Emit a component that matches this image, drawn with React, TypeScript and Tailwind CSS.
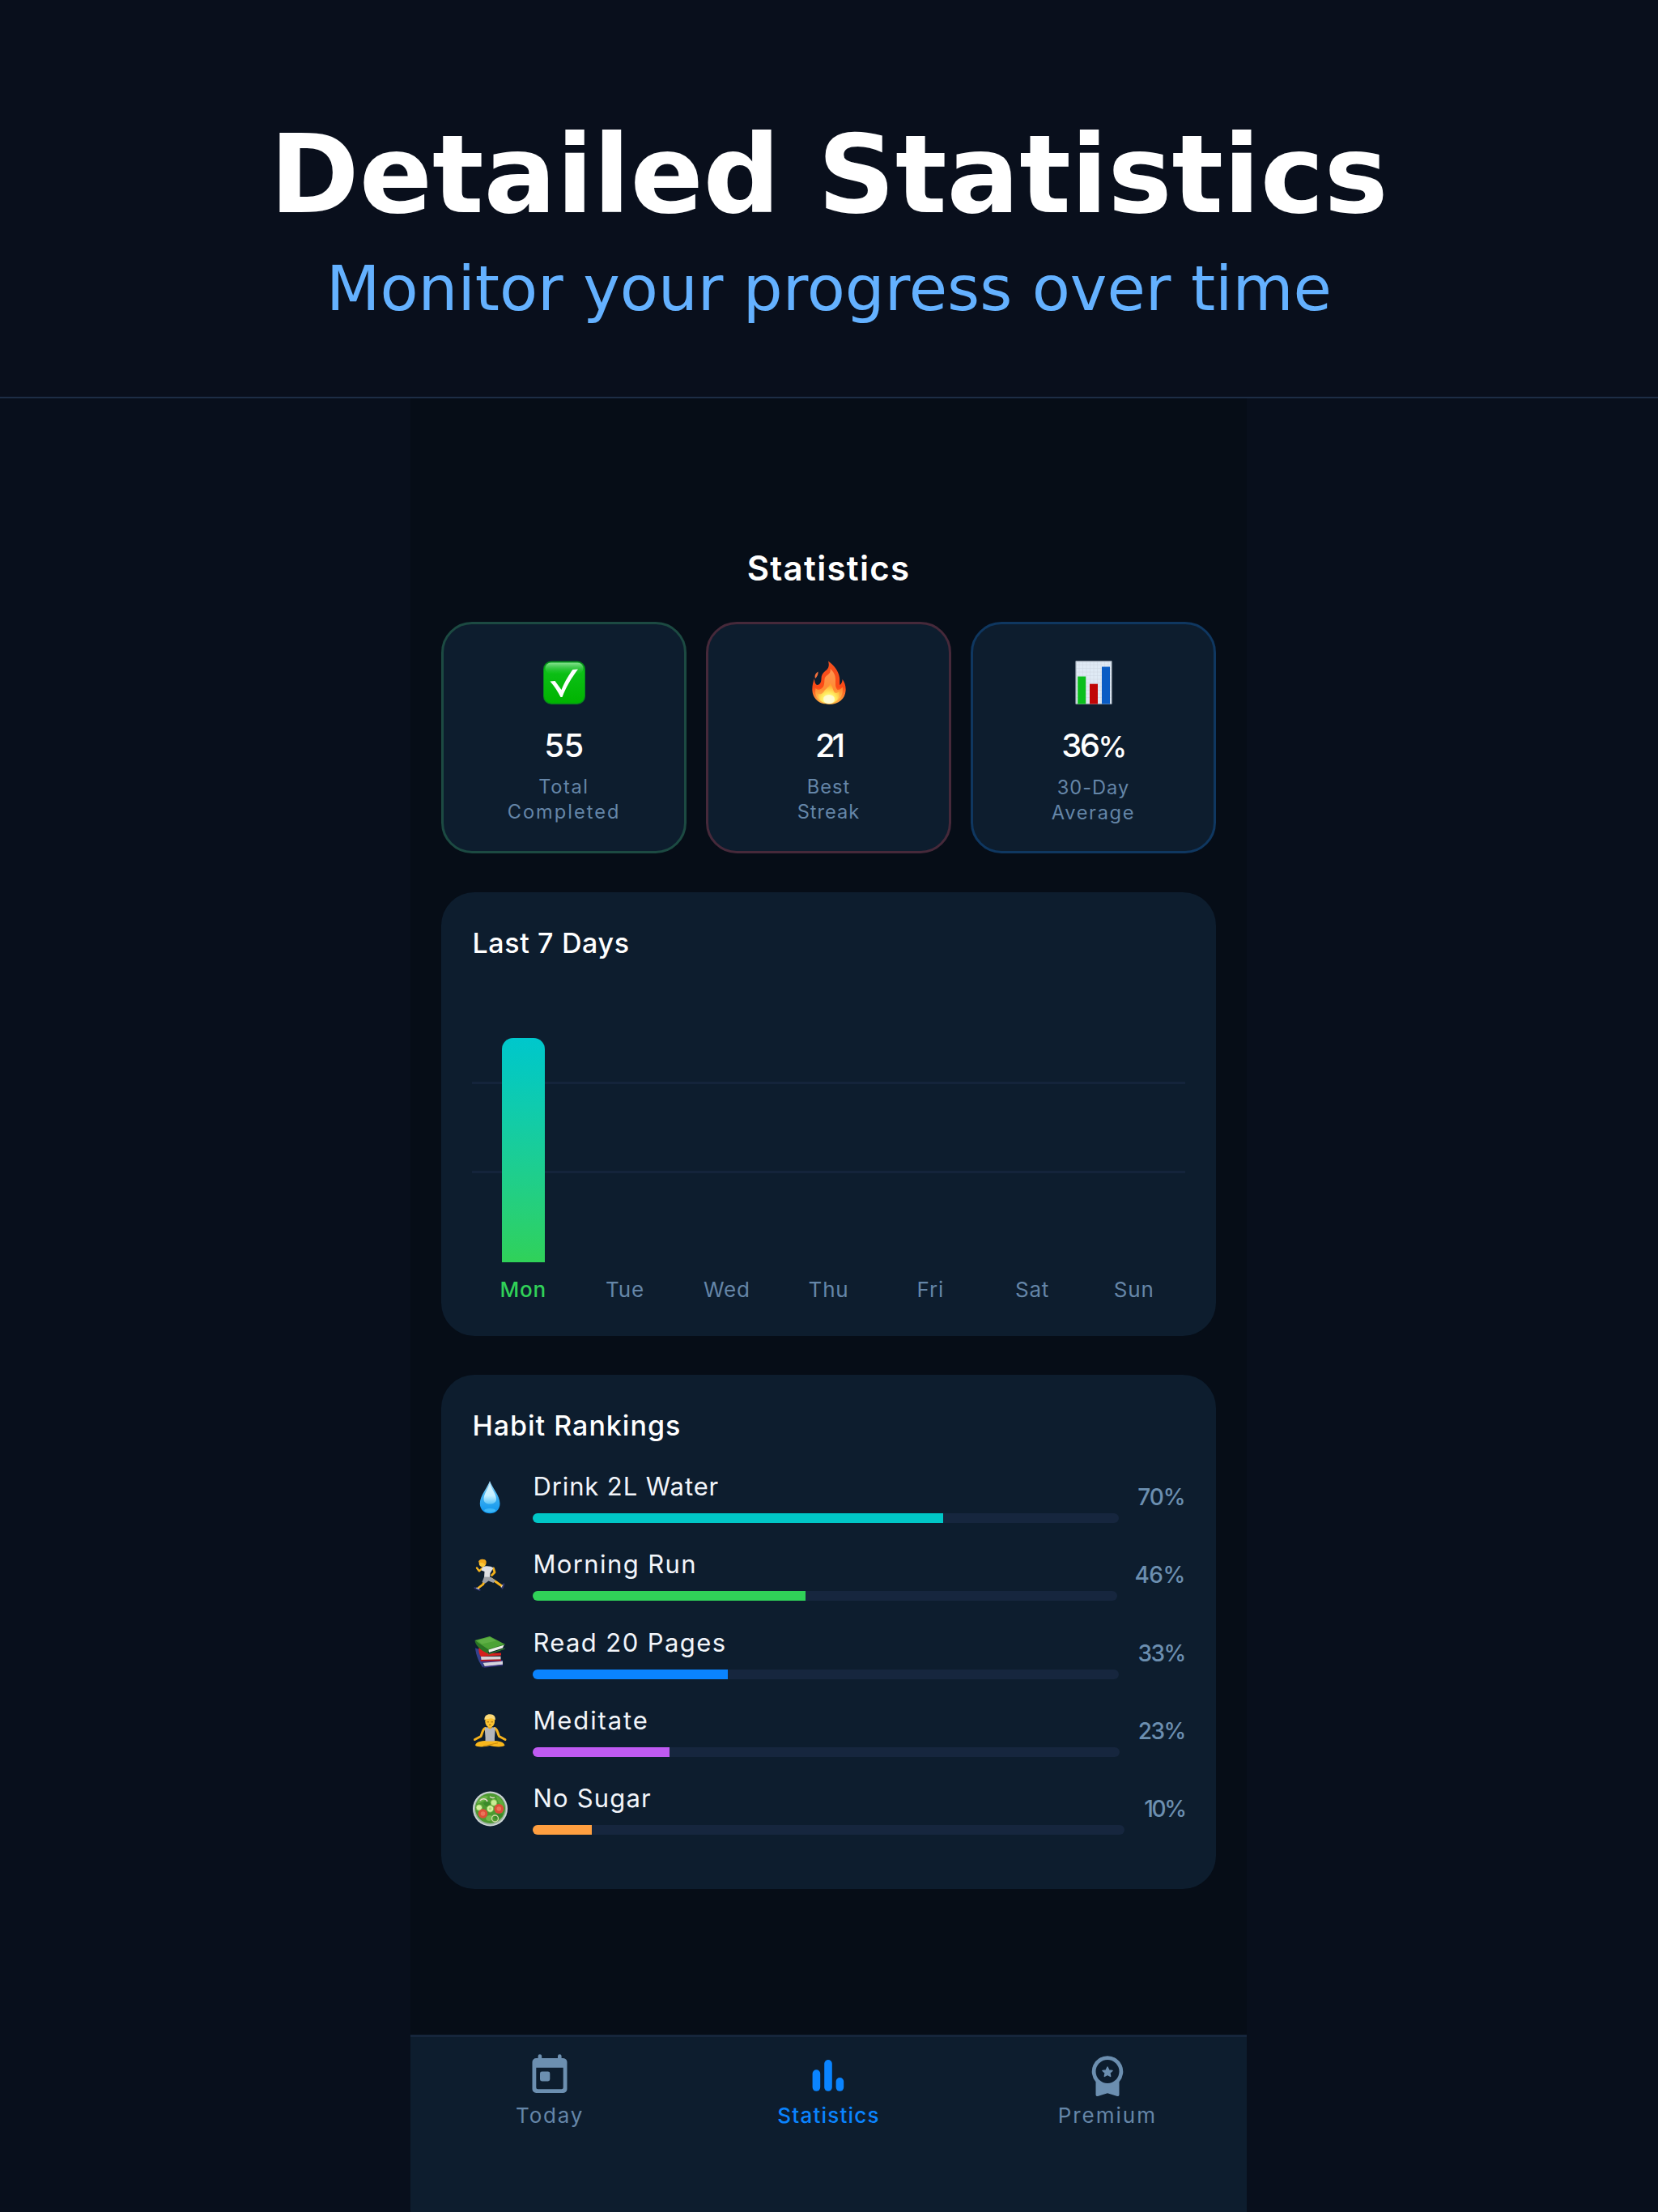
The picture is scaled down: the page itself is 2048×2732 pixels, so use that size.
import type { ComponentType, ReactNode } from "react";

type ArtProps = { className?: string };

type Stat = {
  Art: ComponentType<ArtProps>;
  value: string;
  unit?: string;
  valueClass: string;
  lines: { text: string; className: string }[];
  border: string;
};

type Habit = {
  Art: ComponentType<ArtProps>;
  name: string;
  nameClass: string;
  percent: number;
  percentClass: string;
  bar: string;
};

/* ---------- emoji artwork ---------- */

function CheckArt({ className }: ArtProps) {
  return (
    <svg viewBox="0 0 56 56" className={className}>
      <defs>
        <linearGradient id="check-fill" x1="0" y1="0" x2="0" y2="1">
          <stop offset="0" stopColor="#0a9c20" />
          <stop offset="0.25" stopColor="#0cbf16" />
          <stop offset="1" stopColor="#00b400" />
        </linearGradient>
        <linearGradient id="check-shine" x1="0" y1="0" x2="0" y2="1">
          <stop offset="0" stopColor="#9df0a4" stopOpacity="0.85" />
          <stop offset="1" stopColor="#3ad548" stopOpacity="0" />
        </linearGradient>
      </defs>
      <rect x="2" y="1.5" width="52" height="53.5" rx="10" fill="#078a1c" />
      <rect x="3" y="2.5" width="50" height="51" rx="9" fill="url(#check-fill)" />
      <rect x="4.5" y="3.5" width="47" height="14" rx="7" fill="url(#check-shine)" />
      <path d="M10.5 26.5 L16.5 26 L24.5 37 C29 26 34 18 38.5 12 L45 11.5 C37 22 30 34 25.5 46 L23.5 46 C20 39 16 33 10.5 26.5 Z" fill="#fff" />
    </svg>
  );
}

function FireArt({ className }: ArtProps) {
  return (
    <svg viewBox="0 0 56 56" className={className}>
      <defs>
        <linearGradient id="fire-outer" x1="0" y1="0" x2="0" y2="1">
          <stop offset="0" stopColor="#f4511e" />
          <stop offset="0.6" stopColor="#fb4a16" />
          <stop offset="1" stopColor="#ffb648" />
        </linearGradient>
        <linearGradient id="fire-mid" x1="0" y1="0" x2="0" y2="1">
          <stop offset="0" stopColor="#ff9550" />
          <stop offset="0.6" stopColor="#ff8c32" />
          <stop offset="1" stopColor="#ffd35a" />
        </linearGradient>
        <radialGradient id="fire-core" cx="0.5" cy="0.8" r="0.7">
          <stop offset="0" stopColor="#fffbd0" />
          <stop offset="0.45" stopColor="#ffee62" />
          <stop offset="1" stopColor="#ffa52e" />
        </radialGradient>
      </defs>
      <path d="M27 1.5 C33 6 40 13 41 22 C41.4 26 41 29 41.4 31 C43.5 29.5 44.6 27 44.6 24 C47.5 28 49 33 48.6 38 C48 48 40 55 28 55 C16 55 8 48 7.4 38 C7 33 8.3 28 9.8 23 C10.3 28 11.3 30.5 13.5 31 C17 31 18.5 27 18.5 23.5 C18.6 17 22 15 25 12.5 C28 9.5 28.4 6 27 1.5 Z" fill="url(#fire-outer)" />
      <path d="M14.5 14.5 C14.8 18 13.4 21 11 23 C9.6 19 11.8 16.5 14.5 14.5 Z" fill="#f4713c" />
      <path d="M29.5 11 C34 15 36 19 36 24 C36 30 35.4 34 38.5 37 C41.5 37 43.5 35.500 44.5 33.500 C46.5 42 41.500 53 28 53.500 C15 53 9.500 45 11.5 35 C14 38 18.5 37 21 33 C23.5 28 21 23 24.500 20 C28.500 17 30.500 15 29.5 11 Z" fill="url(#fire-mid)" />
      <path d="M29 29 C33 33 32 36 35 40.500 C37.500 41.500 39 40.500 40.5 39 C42 47 36.5 54 28 54 C19 54 14 48 14.6 42 C17 43 20 42 22 38.5 C25 34.500 29.500 33 29 29 Z" fill="url(#fire-core)" />
      <ellipse cx="28" cy="48.500" rx="7" ry="5.500" fill="#fffbd8" opacity="0.85" />
    </svg>
  );
}

function ChartArt({ className }: ArtProps) {
  return (
    <svg viewBox="0 0 56 56" className={className}>
      <rect x="5.7" y="1.5" width="44.6" height="53" fill="#dfeaf5" />
      <path
        d="M10 2v52M14.5 2v52M19 2v52M23.5 2v52M28 2v52M32.5 2v52M37 2v52M41.5 2v52M46 2v52M6 6h44M6 10.5h44M6 15h44M6 19.5h44M6 24h44M6 28.5h44M6 33h44M6 37.5h44M6 42h44M6 46.5h44M6 51h44"
        stroke="#cdd7e2"
        strokeWidth="0.5"
      />
      <rect x="6.2" y="2" width="43.6" height="52" fill="none" stroke="#b3bcc6" strokeWidth="1" />
      <rect x="8.2" y="20.5" width="10" height="34" fill="#0bbf1c" />
      <rect x="23" y="29.7" width="10" height="24.8" fill="#c00606" />
      <rect x="38" y="8.5" width="10" height="46" fill="#0a5cc4" />
    </svg>
  );
}

function DropArt({ className }: ArtProps) {
  return (
    <svg viewBox="0 0 44 44" className={className}>
      <defs>
        <linearGradient id="drop-fill" x1="0" y1="0" x2="0" y2="1">
          <stop offset="0" stopColor="#a9dcf5" />
          <stop offset="0.45" stopColor="#3fb0f0" />
          <stop offset="1" stopColor="#0d95ee" />
        </linearGradient>
        <linearGradient id="drop-shine" x1="0" y1="0" x2="0" y2="1">
          <stop offset="0" stopColor="#d9f3fd" />
          <stop offset="0.6" stopColor="#c4f0ff" />
          <stop offset="1" stopColor="#5cc4f8" />
        </linearGradient>
      </defs>
      <path d="M22 2 C24.5 10 34.5 20 34.5 30 C34.5 37.5 29 42.3 22.2 42.3 C15.5 42.3 9.8 37.5 9.8 30 C9.8 20 19.5 10 22 2 Z" fill="url(#drop-fill)" />
      <path d="M22 5 C24 12 30 18 30 24.5 C30 28.5 26.5 30.5 22.2 30.5 C17.8 30.5 14.5 28.5 14.5 24.5 C14.5 18 20 12 22 5 Z" fill="url(#drop-shine)" />
      <ellipse cx="22.2" cy="38.5" rx="7" ry="2.5" fill="#4fc3fb" opacity="0.7" />
    </svg>
  );
}

function RunnerArt({ className }: ArtProps) {
  return (
    <svg viewBox="0 0 44 44" className={className} fill="none" strokeLinecap="round" strokeLinejoin="round">
      <path d="M26.5 14 L28 19 L24.5 22.5" stroke="#f2b019" strokeWidth="2.8" />
      <path d="M16.5 28 L13.5 34 L7.5 38.5" stroke="#f7b51f" strokeWidth="2.8" />
      <path d="M24 27 L30 31 L37 36" stroke="#f7b51f" strokeWidth="2.8" />
      <path d="M13 13.5 L9 17.5 L6 13.5" stroke="#f7b51f" strokeWidth="2.4" />
      <path d="M13 12.5 C17 10.500 23 11 26.5 13.5 L22.5 20 L22 26 L15 25.5 L15.5 18 L11.5 16.5 Z" fill="#dfe0e4" />
      <path d="M15 24.5 L23 24.8 L29 29 L26.5 32 L20.5 29.5 L16.5 32.5 L12.5 31 Z" fill="#9da0a6" />
      <circle cx="13" cy="8" r="4.300" fill="#fcc737" />
      <path d="M8 6.5 C8 2.8 13 1.8 16 3.3 C18.5 4.8 17.8 8 16.5 10 C15.5 7.5 12 7 8 6.5 Z" fill="#f3a91c" />
      <path d="M3.5 38.2 L9.5 40.8" stroke="#30376f" strokeWidth="2.2" />
      <path d="M39.3 33.5 L37.5 38.5" stroke="#30376f" strokeWidth="2.2" />
      <path d="M5.5 38.3 L8.5 39.5 M37.5 34.8 L36.3 37.3" stroke="#dcdde6" strokeWidth="1" />
    </svg>
  );
}

function BooksArt({ className }: ArtProps) {
  return (
    <svg viewBox="0 0 44 44" className={className}>
      <path d="M4 15.5 L9 17 L15 38 L13.5 39.5 C9 34 5 25 4 15.5 Z" fill="#34408c" />
      <path d="M9.5 29 L37.5 30.5 L38.5 32 L14 33.5 Z" fill="#46308c" />
      <path d="M13.5 33.8 L38 31.8 L38 36 L16 38.5 Z" fill="#d4d4de" />
      <path d="M15 38 L38 35.8 L38 37.3 L14.5 39.8 Z" fill="#34307c" />
      <path d="M8.5 15 L20 22 L36 21.5 L36 24.5 L11 26 C8.5 23 8 18 8.500 15 Z" fill="#d6201e" />
      <path d="M11 26 L35.5 25.800 L35.5 29.800 L11.5 30 Z" fill="#d8d2d6" />
      <path d="M10.5 30 L36 29.5 L36 31.3 L10.5 31.8 Z" fill="#b81417" />
      <path d="M3.5 6 L22 1 L41 11 L20 20 Z" fill="#4da336" />
      <path d="M7 6 L22 2.2 L30 6.5 L12 10.5 Z" fill="#6ab850" opacity="0.6" />
      <path d="M3.5 6 L20 17 L40.8 10.5 L40 12 L20.5 19 L20 22.5 C13 19.5 4.5 13.5 3.500 6 Z" fill="#2a7524" />
      <path d="M20.5 17.5 L39.5 11.7 L38 15.5 L21 21 Z" fill="#eef0ea" />
      <path d="M20 22.5 L40.5 15.5 L40.5 16.8 L20 23.8 Z" fill="#2f8028" />
    </svg>
  );
}

function LotusArt({ className }: ArtProps) {
  return (
    <svg viewBox="0 0 44 44" className={className}>
      <path d="M16.5 18.500 C13 19.500 13 24 11 28.500 L3.500 32.500" fill="none" stroke="#f6b31d" strokeWidth="3" strokeLinecap="round" strokeLinejoin="round" />
      <path d="M28 18.500 C31.5 19.500 31.5 24 33.5 28.500 L41 32.500" fill="none" stroke="#f6b31d" strokeWidth="3" strokeLinecap="round" strokeLinejoin="round" />
      <path d="M4 39.500 C5 35 12 33.5 22 34 C32 33.5 39.5 35 40.5 39.500 C38 42.500 27 41.5 22 40 C17 41.5 6 42.500 4 39.500 Z" fill="#f8b71c" />
      <path d="M14 40.5 C20 40 26 37.5 32 36.8" fill="none" stroke="#c98a0c" strokeWidth="1" />
      <rect x="19.5" y="14" width="5.2" height="7" fill="#e9a516" />
      <path d="M16 17.8 L19.5 17.3 C20.5 20 24 20 25 17.3 L28.5 17.8 C29 23 27.5 29 28 34.5 L16.5 34.5 C17 29 15.5 23 16 17.8 Z" fill="#b3b5bb" />
      <ellipse cx="22.2" cy="10.3" rx="5.9" ry="7" fill="#fbc230" />
      <path d="M15.5 8.5 C15 3.5 18.5 1 22.5 1.3 C27 1.3 29.5 4.5 28.8 8.5 C26.5 7.5 25 5.5 22 6.5 C19.5 7.3 17.5 6.7 15.5 8.5 Z" fill="#fbd977" />
      <path d="M18.5 10.800h2.500M23.500 10.800h2.500M21 14.300h2.500" stroke="#8c5a10" strokeWidth="0.9" />
    </svg>
  );
}

function SaladArt({ className }: ArtProps) {
  return (
    <svg viewBox="0 0 44 44" className={className}>
      <circle cx="22.5" cy="22" r="21.5" fill="#cfd8d6" />
      <circle cx="22.5" cy="22" r="19.8" fill="#9fb3a3" />
      <circle cx="22.5" cy="21.5" r="18.5" fill="#4d9a31" />
      <path d="M6 16 C9 7 16 5 20 7 C17 12 12 14 6 16 Z" fill="#6db548" />
      <path d="M30 6 C36 9 40 15 39.5 20 C34 18 31 12 30 6 Z" fill="#5fae3c" />
      <path d="M18 36 C15 32 21 28 25 31 C26 35 22 39 18 36 Z" fill="#72b84c" />
      <path d="M28 29 C33 28 37 27 38.5 29 C36 34 32 35 28 34 Z" fill="#3b8a2a" />
      <path d="M14 15 C18 12 24 14 26 18 C22 21 16 20 14 15 Z" fill="#3b8a2a" />
      <path d="M10 12 C12 8.5 18 9 19 13" fill="none" stroke="#eadbd0" strokeWidth="1.5" />
      <path d="M22 7 C24 8.500 26 9 28 8" fill="none" stroke="#eadbd0" strokeWidth="1.3" />
      <circle cx="28.5" cy="34" r="4" fill="none" stroke="#cfd8a4" strokeWidth="1.4" />
      <circle cx="8.8" cy="20.5" r="3.7" fill="#d5f0a0" stroke="#79ba45" strokeWidth="0.8" />
      <circle cx="27" cy="14.5" r="3.9" fill="#c9ec94" stroke="#79ba45" strokeWidth="0.8" />
      <circle cx="22.5" cy="22" r="4.2" fill="#d5f0a0" stroke="#79ba45" strokeWidth="0.8" />
      <circle cx="22.5" cy="22" r="1.8" fill="#aed878" />
      <circle cx="33.3" cy="22" r="5.9" fill="#dd4f38" />
      <circle cx="33.3" cy="22" r="2.8" fill="#ea755a" />
      <circle cx="13.5" cy="28" r="5.8" fill="#dd4f38" />
      <circle cx="13.5" cy="28" r="2.8" fill="#ea755a" />
    </svg>
  );
}

/* ---------- tab icons ---------- */

function TodayIcon() {
  return (
    <svg viewBox="0 0 58 58" className="size-[58px]" fill="#6c8fb0">
      <path
        fillRule="evenodd"
        d="M14.6 7.5a2.3 2.3 0 0 1 4.6 0V10H39V7.5a2.3 2.3 0 0 1 4.6 0V10H45.8A4.8 4.8 0 0 1 50.5 14.8V48.2A4.8 4.8 0 0 1 45.8 53H12.3A4.8 4.8 0 0 1 7.5 48.2V14.8A4.8 4.8 0 0 1 12.3 10H14.6ZM12.3 21.7V46.2A2 2 0 0 0 14.3 48.2H43.7A2 2 0 0 0 45.7 46.2V21.7Z"
      />
      <rect x="17" y="26.5" width="12.3" height="12" rx="2.4" />
    </svg>
  );
}

function StatsIcon() {
  return (
    <svg viewBox="0 0 58 58" className="size-[58px]" fill="#0a84ff">
      <rect x="9.6" y="24.3" width="9.6" height="26.5" rx="4.8" />
      <rect x="24.2" y="12" width="9.6" height="38.8" rx="4.8" />
      <rect x="38.6" y="34" width="9.6" height="16.8" rx="4.8" />
    </svg>
  );
}

function PremiumIcon() {
  return (
    <svg viewBox="0 0 58 58" className="size-[58px]" fill="#6c8fb0">
      <path
        fillRule="evenodd"
        d="M29 7.2a19.3 19.3 0 0 1 14.5 32V55.2a1.9 1.9 0 0 1-2.5 1.8L29 53.2 17 57a1.9 1.9 0 0 1-2.5-1.8V39.2A19.3 19.3 0 0 1 29 7.2Zm0 4.8a14.5 14.5 0 1 0 0 29 14.5 14.5 0 0 0 0-29Z"
      />
      <path
        d="M29 21l1.8 3.9 4.2.5-3.1 2.9.8 4.2L29 30.4l-3.7 2.1.8-4.2-3.1-2.9 4.2-.5Z"
        stroke="#6c8fb0"
        strokeWidth="1.4"
        strokeLinejoin="round"
      />
    </svg>
  );
}

/* ---------- data ---------- */

const STATS: Stat[] = [
  {
    Art: CheckArt,
    value: "55",
    valueClass: "tracking-[-0.5px]",
    lines: [
      { text: "Total", className: "tracking-[1.6px]" },
      { text: "Completed", className: "tracking-[2px]" },
    ],
    border: "border-[#1c4a42]",
  },
  {
    Art: FireArt,
    value: "21",
    valueClass: "tracking-[-4px]",
    lines: [
      { text: "Best", className: "tracking-[1px]" },
      { text: "Streak", className: "tracking-[1px]" },
    ],
    border: "border-[#46293a]",
  },
  {
    Art: ChartArt,
    value: "36",
    unit: "%",
    valueClass: "tracking-[-2.5px]",
    lines: [
      { text: "30-Day", className: "tracking-[1px]" },
      { text: "Average", className: "tracking-[1.7px]" },
    ],
    border: "border-[#0f3760]",
  },
];

const DAYS = [
  { label: "Mon", value: 277 },
  { label: "Tue", value: 0 },
  { label: "Wed", value: 0 },
  { label: "Thu", value: 0 },
  { label: "Fri", value: 0 },
  { label: "Sat", value: 0 },
  { label: "Sun", value: 0 },
];

const HABITS: Habit[] = [
  { Art: DropArt, name: "Drink 2L Water", nameClass: "tracking-[0.9px]", percent: 70, percentClass: "w-[58px] tracking-[-1px]", bar: "bg-[#00c7c7]" },
  { Art: RunnerArt, name: "Morning Run", nameClass: "tracking-[1.4px]", percent: 46.7, percentClass: "w-[60px] tracking-[-0.6px]", bar: "bg-[#30d158]" },
  { Art: BooksArt, name: "Read 20 Pages", nameClass: "tracking-[1.4px]", percent: 33.3, percentClass: "w-[58px] tracking-[-1.6px]", bar: "bg-[#0a84ff]" },
  { Art: LotusArt, name: "Meditate", nameClass: "tracking-[1.9px]", percent: 23.3, percentClass: "w-[57px] tracking-[-1.6px]", bar: "bg-[#bf5af2]" },
  { Art: SaladArt, name: "No Sugar", nameClass: "tracking-[1.2px]", percent: 10, percentClass: "w-[51px] tracking-[-2.4px]", bar: "bg-[#ff9f40]" },
];

/* ---------- sections ---------- */

function StatCard({ Art, value, unit, valueClass, lines, border }: Stat) {
  return (
    <div className={`flex h-[286px] flex-1 flex-col items-center rounded-[38px] border-3 bg-[#0d1d2e] pt-11 ${border}`}>
      <Art className="size-14" />
      <div className={`mt-[22px] text-[40px] leading-14 font-medium text-white ${valueClass}`}>
        {value}
        {unit && <span className="text-[36px]">{unit}</span>}
      </div>
      <div className="mt-[7px] flex flex-col items-center text-[23.6px] leading-[31px] text-[#6586a8]">
        {lines.map((line) => (
          <span key={line.text} className={line.className}>
            {line.text}
          </span>
        ))}
      </div>
    </div>
  );
}

function WeekChart() {
  return (
    <section className="mt-12 h-[548px] rounded-[41px] bg-[#0d1d2e] px-[38.4px] pt-[39px]">
      <h2 className="text-[34px] leading-12 font-medium tracking-[0.65px] text-white">Last 7 Days</h2>
      <div className="relative mt-[38px] h-[332px]">
        <div className="absolute inset-x-0 top-[109px] h-[3px] bg-[#14243b]" />
        <div className="absolute inset-x-0 top-[219px] h-[3px] bg-[#14243b]" />
        <div className="relative flex h-full items-end">
          {DAYS.map((day) => (
            <div key={day.label} className="flex flex-1 justify-center">
              <div
                className="w-[53px] rounded-t-[14px] bg-linear-to-b from-[#00c7cc] to-[#30d158]"
                style={{ height: day.value }}
              />
            </div>
          ))}
        </div>
      </div>
      <div className="mt-4 flex text-[26px] leading-9">
        {DAYS.map((day) => (
          <span
            key={day.label}
            className={`flex-1 text-center tracking-[0.8px] ${day.value > 0 ? "font-medium text-[#30d158]" : "text-[#6586a8]"}`}
          >
            {day.label}
          </span>
        ))}
      </div>
    </section>
  );
}

function HabitRow({ Art, name, nameClass, percent, percentClass, bar }: Habit) {
  return (
    <div className="flex h-16 items-center">
      <Art className="size-11 shrink-0" />
      <div className="ml-[31px] flex-1">
        <div className={`text-[31px] leading-[38px] text-[#f2f5fa] ${nameClass}`}>{name}</div>
        <div className="mt-[14px] h-3 overflow-hidden rounded-full bg-[#16263e]">
          <div className={`h-full ${bar}`} style={{ width: `${percent}%` }} />
        </div>
      </div>
      <div className={`ml-6 flex justify-end text-[28px] leading-10 font-medium text-[#6c8fb0] ${percentClass}`}>
        {Math.floor(percent)}%
      </div>
    </div>
  );
}

function Tab({ icon, label, className }: { icon: ReactNode; label: string; className: string }) {
  return (
    <div className="flex flex-1 flex-col items-center pt-4">
      {icon}
      <span className={`mt-[5px] text-[26px] leading-9 ${className}`}>{label}</span>
    </div>
  );
}

export default function App() {
  return (
    <div className="flex h-[2732px] w-[2048px] flex-col overflow-hidden bg-[#080f1c] font-['Inter',sans-serif]">
      <header className="flex h-[492px] shrink-0 flex-col items-center border-b-2 border-[#1d2d45] bg-[#090f1c] pt-[141px] font-['DejaVu_Sans',sans-serif]">
        <h1 className="text-[133px] leading-[150px] font-bold whitespace-nowrap text-white">Detailed Statistics</h1>
        <p className="mt-[21px] text-[77px] leading-[90px] whitespace-nowrap text-[#64b1ff]">Monitor your progress over time</p>
      </header>

      <main className="ml-[507px] flex w-[1033px] flex-1 flex-col bg-[#060d17]">
        <div className="flex-1 px-[38px] pt-[180px]">
          <h2 className="text-center text-[42px] leading-[60px] font-semibold tracking-[1.3px] text-white">Statistics</h2>

          <div className="mt-9 flex gap-6">
            {STATS.map((stat) => (
              <StatCard key={stat.value} {...stat} />
            ))}
          </div>

          <WeekChart />

          <section className="mt-12 h-[635px] rounded-[41px] bg-[#0d1d2e] px-[38.4px] pt-[39px]">
            <h2 className="text-[34px] leading-12 font-medium tracking-[1px] text-white">Habit Rankings</h2>
            <div className="mt-8 flex flex-col gap-[32.3px]">
              {HABITS.map((habit) => (
                <HabitRow key={habit.name} {...habit} />
              ))}
            </div>
          </section>
        </div>

        <nav className="flex h-[219px] border-t-3 border-[#16263c] bg-[#0d1d2e]">
          <Tab icon={<TodayIcon />} label="Today" className="tracking-[1.8px] text-[#6586a8]" />
          <Tab icon={<StatsIcon />} label="Statistics" className="font-medium tracking-[1.2px] text-[#0a84ff]" />
          <Tab icon={<PremiumIcon />} label="Premium" className="tracking-[2px] text-[#6586a8]" />
        </nav>
      </main>
    </div>
  );
}
